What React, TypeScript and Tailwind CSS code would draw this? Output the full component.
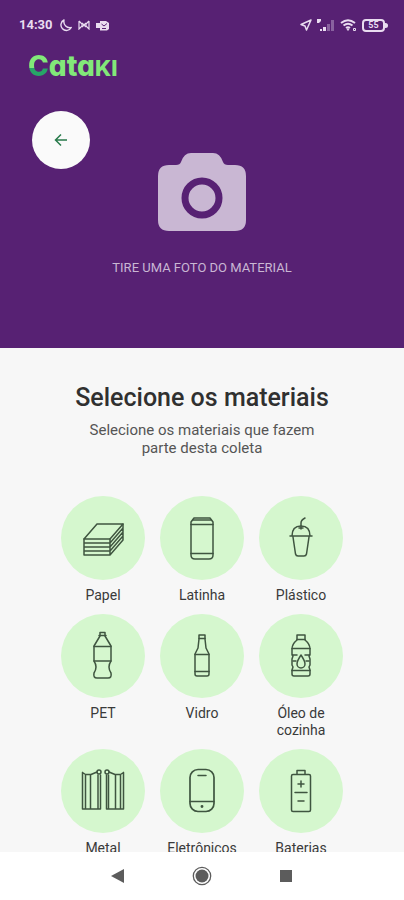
import type { ReactNode } from "react";

type Material = { name: string; icon: ReactNode };

const materials: Material[] = [
  {
    name: "Papel",
    icon: (
      <>
        <path d="M36 28H62L49 43H23Z" />
        <path d="M23 43V59M23 47H49L62 32M23 51H49L62 36M23 55H49L62 40M23 59H49L62 44M62 28V44M49 43V59" />
      </>
    ),
  },
  {
    name: "Latinha",
    icon: (
      <>
        <path d="M34 22H50L53 26V59Q53 63 49 63H35Q31 63 31 59V26Z" />
        <path d="M33 24H51M31 28.500H53M31 57.500H53" />
      </>
    ),
  },
  {
    name: "Plástico",
    icon: (
      <>
        <path d="M33 40C33 33 37 30 42 30S51 33 51 40M31 40H53M34 41L36.500 58Q37 60 39 60H45Q47 60 47.500 58L50 41" />
        <path d="M42 33V27Q42 24 46 22M40 32H44" />
      </>
    ),
  },
  {
    name: "PET",
    icon: (
      <>
        <path d="M39 18.500H44V22L50 32V47Q46 53 50 59Q51 64 47 64H36Q32 64 33 59Q37 53 33 47V32L39 22Z" />
        <path d="M38 21.500H45M33 32.500H50M33 47H50" />
      </>
    ),
  },
  {
    name: "Vidro",
    icon: (
      <>
        <path d="M39 21H45V25L46 34L49 40V60Q49 62 47 62H37Q35 62 35 60V40L38 34L39 25Z" />
        <path d="M39 24.500H45M35 40.500H49M35 57.500H49" />
      </>
    ),
  },
  {
    name: "Óleo de cozinha",
    icon: (
      <>
        <path d="M38 21H46V26Q51 30 51 35V40L50 42L51 45V51L50 53L51 56V60Q51 62 49 62H35Q33 62 33 60V56L34 53L33 51V45L34 42L33 40V35Q33 30 38 26Z" />
        <path d="M38 25.500H46M33 34.500H51M33 41H38M46 41H51M34 47H37M47 47H50M33 56.500H51" />
        <path d="M42 41Q38 47 38 50A4 4 0 0 0 46 50Q46 47 42 41Z" />
      </>
    ),
  },
  {
    name: "Metal",
    icon: (
      <>
        <path d="M21.500 23.500V60H39.500V26M21.500 23.500L24.500 25.500H30L36 23M24.500 25.500V60M29.500 26V60M37 26V60" />
        <path d="M62.500 23.500V60H45.500V26M62.500 23.500L59.500 25.500H54L48 23M59.500 25.500V60M54.500 26V60M47.500 26V60" />
        <circle cx="38" cy="23" r="2" />
        <circle cx="46" cy="23" r="2" />
      </>
    ),
  },
  {
    name: "Eletrônicos",
    icon: (
      <>
        <rect x="30" y="20.500" width="24" height="42" rx="8" strokeWidth="1.700" />
        <path d="M38 26.500H46M30 52.500H54" />
        <circle cx="42" cy="57.500" r="0.700" />
      </>
    ),
  },
  {
    name: "Baterias",
    icon: (
      <>
        <rect x="32.500" y="25.500" width="19" height="37" rx="1.500" />
        <path d="M38 25V21.500H46V25M42 32V38M39 35H45M36 43.500H48M39 52H45" />
      </>
    ),
  },
];

function StatusBar() {
  return (
    <div className="flex h-[50px] items-center justify-between pl-[19px] pr-4 text-[#e9dcf0]">
      <div className="flex items-center gap-[6px]">
        <span className="text-[13px] font-bold">14:30</span>
        <svg width="13" height="13" viewBox="0 0 13 13" fill="none" stroke="currentColor" strokeWidth="1.400">
          <path d="M5 1A5.500 5.500 0 1 0 12.300 8.500C8 9.500 4 6 5 1Z" strokeLinejoin="round" />
        </svg>
        <svg width="12" height="10" viewBox="0 0 12 10" fill="none" stroke="currentColor" strokeWidth="1.200">
          <path d="M1 1V9L4 6V4L1 1M11 1V9L8 6V4L11 1M4 3L6 5L8 3M4 7L6 5L8 7" />
        </svg>
        <svg width="13" height="11" viewBox="0 0 13 11">
          <path d="M4 1H10L13 3V9L11 10.500H4V8H0V3H4Z" fill="currentColor" />
          <path d="M5.500 4L8 6L11 3.500M6 8.500H10" fill="none" stroke="#572173" />
        </svg>
      </div>
      <div className="flex items-center gap-[5px]">
        <svg width="12" height="12" viewBox="0 0 12 12" fill="none" stroke="currentColor" strokeWidth="1.500" strokeLinejoin="round">
          <path d="M11 1L1 5.500L5 7L6.500 11Z" />
        </svg>
        <svg width="18" height="14" viewBox="0 0 18 14" fill="currentColor">
          <path d="M0 1H4V3L2 5H0ZM3 11H5V13H3ZM6 9H9V13H6Z" />
          <path d="M10 6H13V13H10ZM14 2H17V13H14Z" opacity="0.350" />
        </svg>
        <svg width="17" height="14" viewBox="0 0 17 14" fill="none" stroke="currentColor" strokeWidth="1.900">
          <path d="M1 5Q8 -0.500 15 5M3.500 7.500Q8 4 12.500 7.500M6 10Q8 8.500 10 10" />
          <path d="M7 11H9L8 12.500ZM13.500 10.500H15.500V12.500H13.500Z" strokeWidth="1" />
        </svg>
        <div className="flex items-center">
          <span className="flex h-[13px] w-[23px] items-center justify-center rounded border-2 border-current text-[9px] font-bold leading-none">
            55
          </span>
          <span className="h-[5px] w-[3px] rounded-r-sm bg-current" />
        </div>
      </div>
    </div>
  );
}

function Logo() {
  return (
    <div
      role="img"
      aria-label="Cataki"
      className="flex h-8 items-baseline pl-7 font-['Inter',sans-serif] text-[28px] leading-8 font-extrabold text-[#82e879] [font-feature-settings:'cv11']"
    >
      <span className="bg-linear-to-b from-[#82e879] from-55% to-[#27a567] to-55% bg-clip-text text-transparent">C</span>
      <span>ata</span>
      <span className="text-[22px]">KI</span>
    </div>
  );
}

function PhotoHeader() {
  return (
    <header className="bg-[#572173] pb-[71px]">
      <StatusBar />
      <Logo />
      <div className="grid grid-cols-[1fr_auto_1fr] items-start pt-[29px]">
        <button
          type="button"
          aria-label="Voltar"
          className="ml-8 flex size-[58px] items-center justify-center rounded-full bg-[#fafafa] text-[#287a4b]"
        >
          <svg width="14" height="14" viewBox="0 0 14 14" fill="none" stroke="currentColor" strokeWidth="1.500">
            <path d="M13 7H2M7 1.500L1.500 7L7 12.500" />
          </svg>
        </button>
        <button type="button" className="flex flex-col items-center gap-7 pt-[42px] text-[#c9b7d3]">
          <svg width="88" height="78" viewBox="0 0 88 78" fill="currentColor">
            <path d="M11 12H18Q22 12 23 9Q26 0 33 0H55Q62 0 65 9Q66 12 70 12H77Q88 12 88 23V67Q88 78 77 78H11Q0 78 0 67V23Q0 12 11 12Z" />
            <circle cx="44" cy="45" r="17" fill="none" stroke="#572173" strokeWidth="7" />
          </svg>
          <span className="text-[13px] leading-[18px]">TIRE UMA FOTO DO MATERIAL</span>
        </button>
      </div>
    </header>
  );
}

function MaterialButton({ name, icon }: Material) {
  return (
    <button type="button" className="flex w-[84px] flex-col items-center gap-[7px]">
      <span className="size-[84px] rounded-full bg-[#d5f7ce]">
        <svg
          viewBox="0 0 84 84"
          fill="none"
          stroke="#3f5540"
          strokeWidth="1.500"
          strokeLinecap="round"
          strokeLinejoin="round"
          className="size-full"
        >
          {icon}
        </svg>
      </span>
      <span className="text-[14px] leading-[17px] text-[#3a3a3a]">{name}</span>
    </button>
  );
}

function NavigationBar() {
  return (
    <nav className="flex h-12 shrink-0 items-center justify-center gap-[60px] bg-white text-[#5c5c5c]">
      <button type="button" aria-label="Voltar à tela anterior" className="flex size-6 items-center justify-center">
        <svg width="14" height="14" viewBox="0 0 14 14" fill="currentColor">
          <path d="M0 7L13 0V14Z" />
        </svg>
      </button>
      <button type="button" aria-label="Tela inicial" className="flex size-6 items-center justify-center">
        <svg width="20" height="20" viewBox="0 0 20 20" fill="currentColor">
          <circle cx="10" cy="10" r="6.500" />
          <circle cx="10" cy="10" r="8.700" fill="none" stroke="currentColor" strokeWidth="1.300" />
        </svg>
      </button>
      <button type="button" aria-label="Aplicativos recentes" className="flex size-6 items-center justify-center">
        <span className="size-3 bg-current" />
      </button>
    </nav>
  );
}

export default function App() {
  return (
    <div className="flex h-screen flex-col bg-[#f7f7f7] font-['Roboto',sans-serif]">
      <PhotoHeader />
      <main className="flex min-h-0 flex-1 flex-col items-center overflow-hidden pt-[34px]">
        <h1 className="text-[25px] leading-8 font-medium text-[#303030]">Selecione os materiais</h1>
        <p className="mt-[7px] w-[240px] text-center text-[15px] leading-[18px] text-[#555555]">
          Selecione os materiais que fazem parte desta coleta
        </p>
        <div className="mt-[39px] grid grid-cols-3 items-start gap-x-[15px] gap-y-[10px]">
          {materials.map((material) => (
            <MaterialButton key={material.name} {...material} />
          ))}
        </div>
      </main>
      <NavigationBar />
    </div>
  );
}
